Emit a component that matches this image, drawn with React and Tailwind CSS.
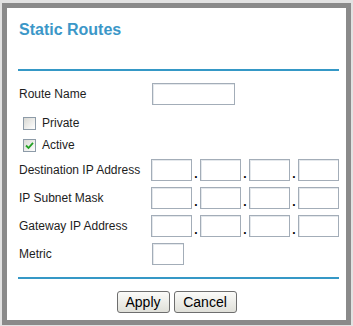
import React from 'react'

const font = { fontFamily: '"Liberation Sans", Arial, sans-serif' }

function Box({ w = 'w-[41px]' }) {
  return <div className={`${w} h-[22px] border border-[#a3adb8] bg-white shadow-[inset_1px_1px_0_#e4e8ec]`}></div>
}

function IpRow({ label }) {
  return (
    <div className="flex items-center h-[22px]">
      <div className="w-[134px] pl-[1px] text-[12px] text-[#1d1d1d]">{label}</div>
      <div className="flex items-end">
        <Box />
        <span className="w-[8px] text-center text-[12px] leading-[14px] font-bold text-black">.</span>
        <Box />
        <span className="w-[8px] text-center text-[12px] leading-[14px] font-bold text-black">.</span>
        <Box />
        <span className="w-[8px] text-center text-[12px] leading-[14px] font-bold text-black">.</span>
        <Box />
      </div>
    </div>
  )
}

function Check({ checked, label }) {
  return (
    <div className="flex items-center h-[20px] pl-[5px]">
      <div className="w-[13px] h-[13px] border border-[#8d9ba8] bg-gradient-to-br from-[#d8d8d3] to-white flex items-center justify-center">
        {checked && (
          <svg width="9" height="9" viewBox="0 0 9 9">
            <path d="M1 4.5 L3.5 7 L8 1.8" fill="none" stroke="#24a124" strokeWidth="1.8" />
          </svg>
        )}
      </div>
      <span className="ml-[6px] text-[12px] text-[#1d1d1d]">{label}</span>
    </div>
  )
}

export default function App() {
  return (
    <div className="w-[353px] h-[326px] bg-[#e2e2e2] pt-[3px] pl-[2px]" style={font}>
      <div className="w-[349px] h-[322px] border-[5px] border-[#8a8a8a] bg-white pl-[11px] pr-[7px] pt-[13px]">
        <div className="pl-[1px] text-[16px] leading-[18px] font-bold text-[#3b97c8]">Static Routes</div>
        <div className="mt-[30px] h-[2px] bg-[#3598c6]"></div>

        <div className="mt-[12px] flex items-center h-[22px]">
          <div className="w-[134px] pl-[1px] text-[12px] text-[#1d1d1d]">Route Name</div>
          <div className="w-[83px] h-[22px] border border-[#a3adb8] bg-white shadow-[inset_1px_1px_0_#e4e8ec]"></div>
        </div>

        <div className="mt-[8px]">
          <Check label="Private" />
        </div>
        <div className="mt-[2px]">
          <Check checked label="Active" />
        </div>

        <div className="mt-[4px] flex flex-col gap-[6px]">
          <IpRow label="Destination IP Address" />
          <IpRow label="IP Subnet Mask" />
          <IpRow label="Gateway IP Address" />
          <div className="flex items-center h-[22px]">
            <div className="w-[134px] pl-[1px] text-[12px] text-[#1d1d1d]">Metric</div>
            <Box w="w-[32px]" />
          </div>
        </div>

        <div className="mt-[12px] h-[2px] bg-[#3598c6]"></div>

        <div className="mt-[12px] flex justify-center gap-[4px] pr-[4px]">
          <button className="w-[53px] h-[22px] rounded-[3px] border border-[#6e6e6e] bg-gradient-to-b from-[#fbfbf9] to-[#e0e0d9] text-[14px] leading-[18px] text-black">Apply</button>
          <button className="w-[63px] h-[22px] rounded-[3px] border border-[#6e6e6e] bg-gradient-to-b from-[#fbfbf9] to-[#e0e0d9] text-[14px] leading-[18px] text-black">Cancel</button>
        </div>
      </div>
    </div>
  )
}
